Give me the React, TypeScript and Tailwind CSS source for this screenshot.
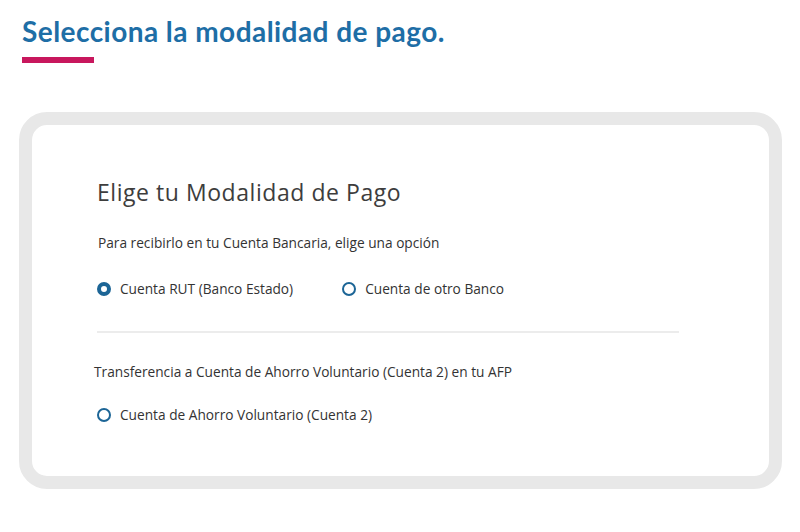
import React, { useState } from 'react';

const Radio = ({ checked, label, onClick }: { checked: boolean; label: string; onClick: () => void }) => (
  <button type="button" onClick={onClick} className="flex items-center gap-[9px] text-left">
    <span
      className={`block w-[14px] h-[14px] rounded-full border-[#1c6596] ${
        checked ? 'border-[4px]' : 'border-2'
      }`}
    />
    <span className="text-[13.7px] leading-[18px] text-[#333333]">{label}</span>
  </button>
);

const App = () => {
  const [bank, setBank] = useState<'rut' | 'otro' | 'afp'>('rut');

  return (
    <div className="w-[800px] h-[532px] bg-white overflow-hidden font-['Open_Sans','Noto_Sans',sans-serif]">
      {/* Page title */}
      <div className="pl-[22px] pt-[15px]">
        <h1 className="font-['Lato',sans-serif] text-[28px] leading-[32px] font-bold text-[#1e6ea6] tracking-[0.45px]">
          Selecciona la modalidad de pago.
        </h1>
        <div className="mt-[10px] w-[72px] h-[6px] bg-[#c8175d]" />
      </div>

      {/* Card */}
      <div className="mt-[49px] ml-[19px] w-[763px] h-[377px] rounded-[28px] border-[13px] border-[#e8e8e8] bg-white">
        <div className="pl-[65px] pt-[52px] pr-[90px]">
          <h2 className="text-[23px] leading-[30px] text-[#3d3d3d] tracking-[0.55px]">Elige tu Modalidad de Pago</h2>

          <p className="mt-[27px] text-[13.7px] leading-[18px] text-[#333333] pl-px">
            Para recibirlo en tu Cuenta Bancaria, elige una opción
          </p>

          <div className="mt-[28px] flex items-center gap-[49px]">
            <Radio checked={bank === 'rut'} label="Cuenta RUT (Banco Estado)" onClick={() => setBank('rut')} />
            <Radio checked={bank === 'otro'} label="Cuenta de otro Banco" onClick={() => setBank('otro')} />
          </div>

          <div className="mt-[33px] h-[2px] bg-[#ececec]" />

          <p className="mt-[30px] -ml-[3px] text-[13.7px] leading-[18px] text-[#333333]">
            Transferencia a Cuenta de Ahorro Voluntario (Cuenta 2) en tu AFP
          </p>

          <div className="mt-[25px]">
            <Radio checked={bank === 'afp'} label="Cuenta de Ahorro Voluntario (Cuenta 2)" onClick={() => setBank('afp')} />
          </div>
        </div>
      </div>
    </div>
  );
};

export default App;
